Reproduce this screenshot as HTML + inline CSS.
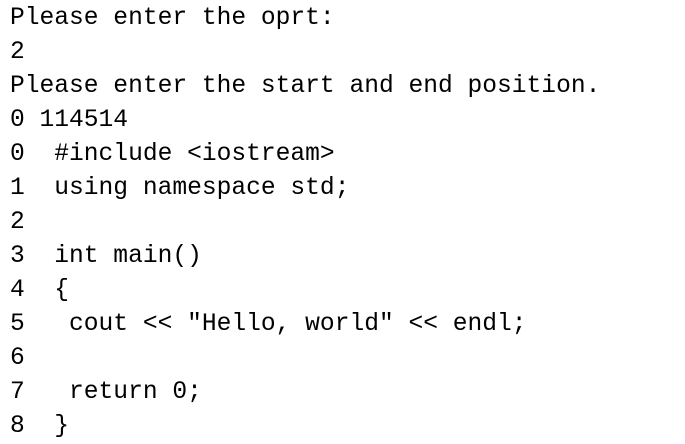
<!DOCTYPE html>
<html><head><style>
html,body{margin:0;padding:0;background:#fff;width:685px;height:444px;overflow:hidden}
pre{margin:0;padding:2px 0 0 10px;font-family:"Liberation Mono",monospace;font-size:24.6px;line-height:34px;color:#000;letter-spacing:0}
</style></head><body><pre>Please enter the oprt:
2
Please enter the start and end position.
0 114514
0  #include &lt;iostream&gt;
1  using namespace std;
2
3  int main()
4  {
5   cout &lt;&lt; "Hello, world" &lt;&lt; endl;
6
7   return 0;
8  }</pre></body></html>
